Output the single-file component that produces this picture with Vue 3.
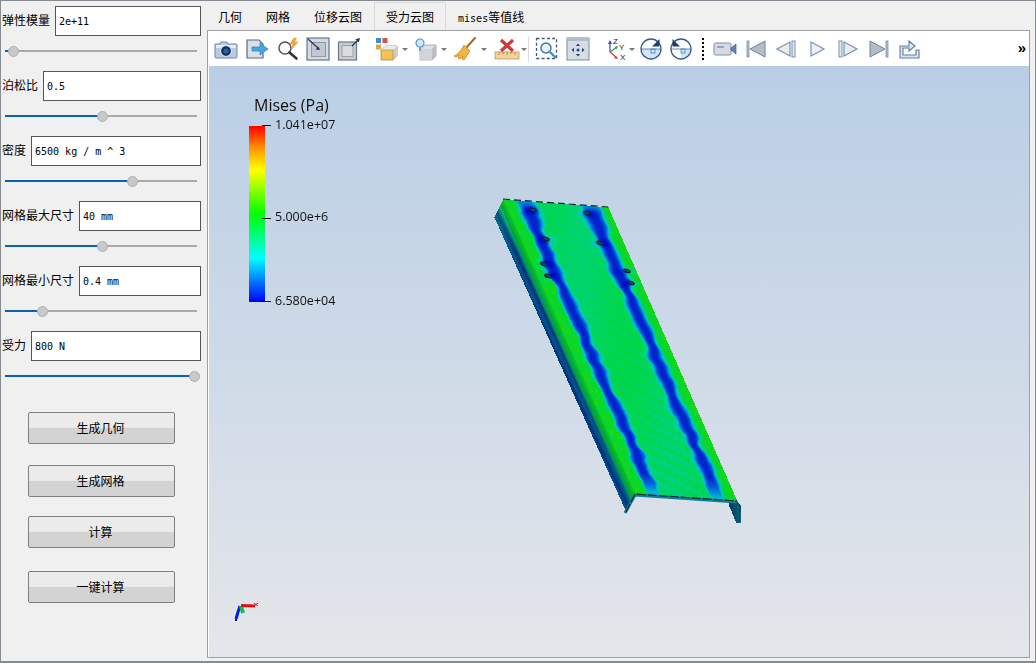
<script setup>
import { ref, onMounted } from 'vue';

const fields = [
    { label: '弹性模量', value: '2e+11', pos: 8 },
    { label: '泊松比', value: '0.5', pos: 97 },
    { label: '密度', value: '6500 kg / m ^ 3', pos: 127 },
    { label: '网格最大尺寸', value: '40 mm', pos: 97 },
    { label: '网格最小尺寸', value: '0.4 mm', pos: 37 },
    { label: '受力', value: '800 N', pos: 189 }
];
const actions = ['生成几何', '生成网格', '计算', '一键计算'];
const tabs = ['几何', '网格', '位移云图', '受力云图'];

const scene = ref(null);

const OX = 209;
const OY = 66;
const holes = [[533, 210], [587, 213], [546, 239], [600, 243], [544, 264], [627, 271], [548, 276], [631, 283]];

// jet 色带
const stops = [
    [0, 0, 10, 200], [0.1, 0, 40, 205], [0.2, 0, 90, 215], [0.3, 0, 165, 215],
    [0.38, 0, 205, 185], [0.46, 0, 212, 110], [0.54, 0, 215, 60], [0.64, 20, 215, 20], [0.8, 90, 225, 0]
];

function jet(val) {
    const t = Math.max(0, Math.min(0.8, val));
    for (let i = 1; i < stops.length; i++) {
        if (t <= stops[i][0]) {
            const a = stops[i - 1];
            const b = stops[i];
            const k = (t - a[0]) / (b[0] - a[0]);
            return [a[1] + (b[1] - a[1]) * k, a[2] + (b[2] - a[2]) * k, a[3] + (b[3] - a[3]) * k];
        }
    }
    return stops[stops.length - 1].slice(1);
}

function smooth(a, b, x) {
    const t = Math.max(0, Math.min(1, (x - a) / (b - a)));
    return t * t * (3 - 2 * t);
}

function hash(x, y) {
    const h = Math.sin(x * 127.1 + y * 311.7) * 43758.5453;
    return h - Math.floor(h);
}

function mottle(x, y) {
    return (Math.sin(x * 0.71 + y * 0.33) * Math.sin(y * 0.41 - x * 0.23) + Math.sin(x * 0.29 - y * 0.57 + 1.3)) * 0.5;
}

function topValue(s, v, x, y) {
    const w1 = 0.007 * Math.sin(v * 17 + 1) + 0.006 * Math.sin(v * 47) + 0.005 * Math.sin(v * 113) + 0.006 * v * Math.sin(v * 89);
    const w2 = 0.007 * Math.sin(v * 14 + 2) + 0.006 * Math.sin(v * 43 + 1) + 0.005 * Math.sin(v * 107) + 0.006 * v * Math.sin(v * 83);
    const spread = 0.095 + 0.016 * Math.sin(v * 37) + 0.012 * Math.sin(v * 71 + 3) + 0.03 * (1 - smooth(0, 0.2, v));
    let base = 0.49 + 0.025 * Math.sin(v * 9 + s * 6);
    if (s < 0.13) base = 0.6 + (hash(x, y) - 0.5) * 0.14;
    if (s > 0.9) base = 0.53 + (s - 0.9) * 1.1;
    const d = Math.min(Math.abs(s - 0.19 - w1), Math.abs(s - 0.82 - w2));
    let val = 0.09 + (base - 0.09) * smooth(0.014, 0.014 + spread, d);
    val += mottle(x, y) * 0.04 * smooth(0.02, 0.08, d) * (0.4 + v);
    if (v > 0.92) val = Math.max(val, 0.09 + (v - 0.92) * 3.4);
    if (v < 0.04) val = Math.max(val, 0.28 * (1 - v / 0.04) + val * (v / 0.04));
    for (const h of holes) {
        const dx = (x - h[0]) / 9;
        const dy = (y - h[1]) / 4;
        val -= 0.16 * Math.exp(-(dx * dx + dy * dy));
    }
    return val;
}

function sideColor(w, v, x, y) {
    const grain = hash(x, y) - 0.5;
    const far = 1 - smooth(0, 0.18, v);
    if (w < 0.36) {
        const c = jet(0.6 - w * 0.3 + grain * 0.14);
        return c.map((n) => n * (0.92 - w * 0.5));
    }
    const k = smooth(0.36, 0.6, w);
    const band = 0.5 + 0.5 * Math.sin(w * 15 + v * 6 + grain);
    const r = 8 * (1 - k);
    const g = 150 * (1 - k) + (52 + band * 32) * k + far * 55 * (1 - w * 0.6);
    const b = 100 * (1 - k) + (118 + band * 26) * k;
    return [r, g, b];
}

function inPoly(poly, x, y) {
    let inside = false;
    for (let i = 0, j = poly.length - 1; i < poly.length; j = i++) {
        const a = poly[i];
        const b = poly[j];
        if ((a[1] > y) !== (b[1] > y) && x < ((b[0] - a[0]) * (y - a[1])) / (b[1] - a[1]) + a[0]) inside = !inside;
    }
    return inside;
}

function drawPlate(ctx, w, h) {
    const img = ctx.createImageData(w, h);
    const rightLip = [[728, 502], [738, 502], [741, 506], [740, 523], [736, 523], [729, 506]];
    for (let py = 190; py < 530; py++) {
        const y = py - OY;
        for (let px = 485; px < 745; px++) {
            const dx = px - 503;
            const dy = py - 199;
            const raw = (dx * 295 - dy * 132) / 29919;
            const v = (-dx * 8 + dy * 105) / 29919;
            const w1 = (295 * dx - 132 * dy) / -5031;
            const v1 = (18 * dx + 9 * dy) / 5031;
            let col = null;
            if (raw >= 0 && v >= 0 && v <= 1) {
                const s = raw / (1 - 0.025 * v);
                if (s <= 1) col = jet(topValue(s, v, px, py));
            } else if (w1 >= 0 && w1 <= 1 && v1 >= 0 && v1 <= 1) {
                col = sideColor(w1, v1, px, py);
            } else if (inPoly(rightLip, px, py)) {
                col = px > 737 ? [12, 105, 125] : [10, 52 + (px - 728) * 4, 105];
            }
            if (col) {
                const i = (y * w + (px - OX)) * 4;
                img.data[i] = col[0];
                img.data[i + 1] = col[1];
                img.data[i + 2] = col[2];
                img.data[i + 3] = 255;
            }
        }
    }
    ctx.putImageData(img, 0, 0);
}

function line(ctx, pts, color, width, dash) {
    ctx.beginPath();
    pts.forEach((p, i) => (i ? ctx.lineTo(p[0] - OX, p[1] - OY) : ctx.moveTo(p[0] - OX, p[1] - OY)));
    ctx.strokeStyle = color;
    ctx.lineWidth = width;
    ctx.setLineDash(dash || []);
    ctx.stroke();
    ctx.setLineDash([]);
}

function drawDetails(ctx) {
    // 孔
    for (const h of holes) {
        ctx.beginPath();
        ctx.ellipse(h[0] - OX, h[1] - OY, 3.4, 1.6, 0.25, 0, Math.PI * 2);
        ctx.fillStyle = '#0c4a5c';
        ctx.fill();
        ctx.strokeStyle = '#0b2030';
        ctx.lineWidth = 1.1;
        ctx.stroke();
    }
    // 边线
    line(ctx, [[503, 199], [608, 207]], '#14242e', 1.2, [7, 4]);
    line(ctx, [[625, 513], [635, 495], [737, 502]], '#0c7f9a', 3);
    line(ctx, [[626, 512], [635, 494], [737, 501]], '#10262f', 1.2, [9, 2]);
    line(ctx, [[737, 502], [740, 506], [739, 522]], '#12303c', 1);
    // 坐标轴
    line(ctx, [[240, 606], [238, 612], [236, 619]], '#0020e0', 3);
    line(ctx, [[235, 620], [237, 620]], '#001a90', 2);
    line(ctx, [[241, 606], [243, 613]], '#10c040', 4);
    line(ctx, [[241, 605.5], [255, 606]], '#e01010', 3);
    line(ctx, [[254, 603], [258, 606]], '#e01010', 1);
    line(ctx, [[258, 603], [254, 606]], '#e01010', 1);
}

onMounted(() => {
    const canvas = scene.value;
    const ctx = canvas.getContext('2d');
    drawPlate(ctx, canvas.width, canvas.height);
    drawDetails(ctx);
});
</script>

<template>
    <div class="window">
        <!-- 左侧参数 -->
        <aside class="side">
            <template v-for="f in fields" :key="f.label">
                <div class="field">
                    <span class="field-label">{{ f.label }}</span>
                    <input class="field-input" type="text" :value="f.value" />
                </div>
                <div class="slider">
                    <div class="groove">
                        <div class="groove-fill" :style="{ width: f.pos + 'px' }"></div>
                        <div class="handle" :style="{ left: f.pos - 5 + 'px' }"></div>
                    </div>
                </div>
            </template>
            <div class="actions">
                <button v-for="a in actions" :key="a" class="action">{{ a }}</button>
            </div>
        </aside>

        <main class="main">
            <div class="tabs">
                <div v-for="(t, i) in tabs" :key="t" class="tab" :class="{ active: i === 3 }">{{ t }}</div>
                <div class="tab"><span class="mono">mises</span>等值线</div>
            </div>
            <div class="pane">
                <div class="toolbar">
                    <!-- 截图 -->
                    <div class="tool">
                        <svg width="24" height="24" viewBox="0 0 24 24">
                            <path d="M1 7h5l1-2h6l1 2h8a1 1 0 0 1 1 1v12a1 1 0 0 1-1 1H2a1 1 0 0 1-1-1z" fill="#b9cbe2" stroke="#6d86a8" />
                            <rect x="2" y="8" width="20" height="3" fill="#e4ecf6" />
                            <circle cx="12" cy="14" r="5.4" fill="#16305e" stroke="#e8eef6" />
                            <circle cx="12" cy="14" r="2.6" fill="#2a62a8" />
                        </svg>
                    </div>
                    <!-- 导出 -->
                    <div class="tool">
                        <svg width="24" height="24" viewBox="0 0 24 24">
                            <path d="M2 3h12l4 4v14H2z" fill="#dcdfe5" stroke="#5d6b80" stroke-width="1.2" />
                            <path d="M7 10h8V6l8 6-8 6v-4H7z" fill="#45a6e6" stroke="#2f7fbd" stroke-width=".7" />
                        </svg>
                    </div>
                    <!-- 放大镜闪电 -->
                    <div class="tool">
                        <svg width="24" height="24" viewBox="0 0 24 24">
                            <circle cx="9" cy="11" r="6" fill="#fff" stroke="#555" stroke-width="1.5" />
                            <path d="M13.5 15.5l7 6" stroke="#333" stroke-width="2.6" stroke-linecap="round" />
                            <path d="M18 1l-4 6h3l-2 6 7-8h-3.500l2-4z" fill="#f2a33a" stroke="#d98a20" stroke-width=".4" />
                        </svg>
                    </div>
                    <!-- 重置相机 -->
                    <div class="tool">
                        <svg width="24" height="24" viewBox="0 0 24 24">
                            <rect x="1" y="1" width="22" height="22" fill="#d3dbe6" stroke="#66758a" stroke-width="1.200" />
                            <rect x="5.500" y="5.500" width="14" height="14" fill="#c2c8d0" stroke="#8f99a6" />
                            <path d="M2 2l10 9" stroke="#23344f" stroke-width="1.200" />
                            <path d="M14 13l-4.500-.6 3-3z" fill="#23344f" />
                        </svg>
                    </div>
                    <!-- 缩放到数据 -->
                    <div class="tool">
                        <svg width="24" height="24" viewBox="0 0 24 24">
                            <rect x="1.500" y="5" width="18" height="18" fill="#c9ccd1" stroke="#6c7788" stroke-width="1.200" />
                            <rect x="5" y="8.500" width="11" height="11" fill="#d9dbde" stroke="#9aa1ac" />
                            <path d="M15 9l6-6" stroke="#23344f" stroke-width="1.200" />
                            <path d="M23 1l-1.200 4.600-3.400-3.400z" fill="#23344f" />
                        </svg>
                    </div>
                    <!-- 选择单元 -->
                    <div class="tool drop first-drop">
                        <svg width="26" height="24" viewBox="0 0 26 24">
                            <path d="M6 13l5-4h11v10l-4 4H6z" fill="#f6c253" stroke="#9a8a6a" stroke-width=".8" />
                            <path d="M18 13l4-4v10l-4 4z" fill="#c9ccd2" />
                            <path d="M6 13l5-4h11l-4 4z" fill="#e9ebef" />
                            <path d="M6 13h12v10" fill="none" stroke="#b59a5a" stroke-width=".8" />
                            <rect x="1" y="1" width="5" height="5" fill="#3c8ad0" />
                            <rect x="7.500" y="1" width="5" height="5" fill="#d0564f" />
                            <rect x="1" y="7.500" width="5" height="5" fill="#e5a83c" />
                        </svg>
                        <i class="caret"></i>
                    </div>
                    <!-- 灯泡 -->
                    <div class="tool drop">
                        <svg width="26" height="24" viewBox="0 0 26 24">
                            <path d="M6 12l5-4h11v11l-4 4H6z" fill="#dfe2e6" stroke="#9aa0a8" stroke-width=".8" />
                            <path d="M18 12l4-4v11l-4 4z" fill="#b9bdc4" />
                            <path d="M6 12h12v11H6z" fill="#d0d3d8" />
                            <circle cx="6" cy="6" r="4" fill="#cfe6fa" stroke="#4f94d0" stroke-width="1.200" />
                            <path d="M5 10v4h2v-4" fill="#8aa0b8" />
                        </svg>
                        <i class="caret"></i>
                    </div>
                    <!-- 扫帚 -->
                    <div class="tool drop">
                        <svg width="26" height="24" viewBox="0 0 26 24">
                            <path d="M21 1l-9 10" stroke="#a06a24" stroke-width="2" stroke-linecap="round" />
                            <path d="M10 8l6 6-6 9-2-1 1-3-3 3-2-1 1-3-3 2-2-1c4-2 7-5 10-11z" fill="#f0b545" stroke="#c78a26" stroke-width=".8" />
                        </svg>
                        <i class="caret"></i>
                    </div>
                    <!-- 标尺 -->
                    <div class="tool drop">
                        <svg width="26" height="24" viewBox="0 0 26 24">
                            <rect x="1" y="15" width="24" height="7" fill="#f2d49a" stroke="#bb9a60" stroke-width=".8" />
                            <path d="M5 15v3M9 15v2M13 15v3M17 15v2M21 15v3" stroke="#a98950" />
                            <path d="M7 3l12 11M19 3L7 14" stroke="#cf3a35" stroke-width="3.200" />
                        </svg>
                        <i class="caret"></i>
                    </div>
                    <i class="sep"></i>
                    <!-- 框选缩放 -->
                    <div class="tool">
                        <svg width="24" height="24" viewBox="0 0 24 24">
                            <rect x="1.500" y="1.500" width="20" height="20" fill="#fff" stroke="#40587e" stroke-width="1.300" stroke-dasharray="3 2.200" />
                            <circle cx="11" cy="11" r="5" fill="#eaf4fc" stroke="#3d6fa8" stroke-width="1.400" />
                            <path d="M15 15l6 6" stroke="#3a8fd0" stroke-width="2.400" />
                        </svg>
                    </div>
                    <!-- 中心 -->
                    <div class="tool">
                        <svg width="24" height="24" viewBox="0 0 24 24">
                            <rect x="1" y="1" width="22" height="22" fill="#d6dde7" stroke="#7e8ca0" />
                            <rect x="1" y="1" width="22" height="3" fill="#aebccd" />
                            <path d="M12 6.500l2.200 2.500h-4.400zM12 19.500l2.200-2.500h-4.400zM5.500 13l2.500-2.200v4.400zM18.500 13L16 10.800v4.400z" fill="#2f4a6e" />
                            <circle cx="12" cy="13" r="1.500" fill="#2f4a6e" />
                        </svg>
                    </div>
                    <!-- 坐标轴方向 -->
                    <div class="tool drop axes">
                        <svg width="22" height="24" viewBox="0 0 22 24">
                            <path d="M4 15V5" stroke="#2f52b0" stroke-width="1.200" />
                            <path d="M4 3l2 4H2z" fill="#2f52b0" />
                            <path d="M4 15l7-5" stroke="#2a9a4a" stroke-width="1.200" />
                            <path d="M12 9l-1.500 3.500-2-2.600z" fill="#2a9a4a" />
                            <path d="M4 15l7 6" stroke="#d83a30" stroke-width="1.200" />
                            <path d="M12 22l-4-.8 2-2.400z" fill="#d83a30" />
                            <text x="7" y="7" class="axis-letter">Z</text>
                            <text x="13" y="13" class="axis-letter">Y</text>
                            <text x="14" y="23" class="axis-letter">X</text>
                        </svg>
                        <i class="caret"></i>
                    </div>
                    <!-- 旋转 -->
                    <div class="tool">
                        <svg width="24" height="24" viewBox="0 0 24 24">
                            <path d="M2 12h20a10 10 0 0 1-20 0z" fill="#cfe6f7" />
                            <rect x="12" y="12" width="4" height="4" fill="none" stroke="#4a7fb0" stroke-width=".8" />
                            <path d="M2 12h20" stroke="#3f6fa0" stroke-width=".8" />
                            <circle cx="12" cy="12" r="10" fill="none" stroke="#3a5a86" stroke-width="1.300" />
                            <path d="M20.500 2v7.500h-7.500z" fill="#1f3e6c" />
                        </svg>
                    </div>
                    <div class="tool">
                        <svg width="24" height="24" viewBox="0 0 24 24">
                            <path d="M12 12h10a10 10 0 0 1-10 10z" fill="#cfe6f7" />
                            <path d="M2 12a10 10 0 0 0 10 10V12z" fill="#fff" />
                            <rect x="12" y="12" width="4" height="4" fill="none" stroke="#4a7fb0" stroke-width=".8" />
                            <path d="M2 12h20" stroke="#3f6fa0" stroke-width=".8" />
                            <circle cx="12" cy="12" r="10" fill="none" stroke="#3a5a86" stroke-width="1.300" />
                            <path d="M3.500 2v7.500H11z" fill="#1f3e6c" />
                        </svg>
                    </div>
                    <i class="dots"></i>
                    <!-- 动画相机 -->
                    <div class="tool">
                        <svg width="24" height="24" viewBox="0 0 24 24">
                            <rect x="1" y="6" width="17" height="12" rx="1.500" fill="#d6dbe3" stroke="#7f8ea3" />
                            <rect x="4" y="9" width="7" height="2" fill="#9aa6b6" />
                            <path d="M18 11l5-4v10l-5-4z" fill="#5d86b8" stroke="#3c5f8e" stroke-width=".7" />
                        </svg>
                    </div>
                    <!-- 播放控制 -->
                    <div class="tool">
                        <svg width="24" height="24" viewBox="0 0 24 24">
                            <rect x="3" y="4" width="2" height="16" fill="#b9c2ce" stroke="#6f84a2" stroke-width=".7" />
                            <path d="M21 4v16L6 12z" fill="#b4bcc8" stroke="#6f84a2" />
                        </svg>
                    </div>
                    <div class="tool">
                        <svg width="24" height="24" viewBox="0 0 24 24">
                            <path d="M16 5v14L3 12z" fill="#e8ecf1" stroke="#7d93b0" stroke-width="1.200" />
                            <rect x="18" y="4" width="3" height="16" fill="#e4e8ee" stroke="#7d93b0" />
                        </svg>
                    </div>
                    <div class="tool">
                        <svg width="24" height="24" viewBox="0 0 24 24">
                            <path d="M6 5v14l13-7z" fill="#eef1f5" stroke="#7d93b0" stroke-width="1.200" />
                        </svg>
                    </div>
                    <div class="tool">
                        <svg width="24" height="24" viewBox="0 0 24 24">
                            <rect x="3" y="4" width="3" height="16" fill="#e4e8ee" stroke="#7d93b0" />
                            <path d="M8 5v14l13-7z" fill="#e8ecf1" stroke="#7d93b0" stroke-width="1.200" />
                        </svg>
                    </div>
                    <div class="tool">
                        <svg width="24" height="24" viewBox="0 0 24 24">
                            <path d="M3 4v16l15-8z" fill="#b4bcc8" stroke="#6f84a2" />
                            <rect x="19" y="4" width="2" height="16" fill="#b9c2ce" stroke="#6f84a2" stroke-width=".7" />
                        </svg>
                    </div>
                    <div class="tool">
                        <svg width="24" height="24" viewBox="0 0 24 24">
                            <path d="M3 9h9V4l6 5-6 5v-3H6v7h13v-5h3v8H3z" fill="#dbe5f0" stroke="#5c7fa8" stroke-width="1.100" />
                        </svg>
                    </div>
                    <span class="more">»</span>
                </div>

                <!-- 渲染视图 -->
                <div class="view">
                    <canvas ref="scene" class="scene" width="820" height="592"></canvas>
                    <div class="legend">
                        <div class="legend-title">Mises (Pa)</div>
                        <div class="legend-bar"></div>
                        <i class="tick t-top"></i>
                        <i class="tick t-mid"></i>
                        <i class="tick t-bot"></i>
                        <span class="legend-num n-top">1.041e+07</span>
                        <span class="legend-num n-mid">5.000e+6</span>
                        <span class="legend-num n-bot">6.580e+04</span>
                    </div>
                </div>
            </div>
        </main>
    </div>
</template>

<style scoped>
.window {
    width: 1036px;
    height: 663px;
    box-sizing: border-box;
    display: flex;
    background: #f0f0f0;
    border: 1px solid #868c94;
    border-width: 1px 1px 2px 1px;
    font-family: "Noto Sans CJK SC", "Liberation Sans", sans-serif;
    font-size: 12px;
    color: #000;
    overflow: hidden;
}

.side {
    width: 206px;
    flex: none;
    padding-top: 5px;
}

.field {
    display: flex;
    align-items: center;
    gap: 5px;
    height: 30px;
    padding: 0 6px 0 1px;
}

.field-label {
    flex: none;
    line-height: 16px;
    margin-top: -2px;
}

.field-input {
    flex: 1;
    min-width: 0;
    height: 30px;
    box-sizing: border-box;
    border: 1px solid #555;
    background: #fff;
    padding: 0 3px;
    font-family: "DejaVu Sans Mono", "Liberation Mono", monospace;
    font-size: 10px;
    color: #000;
    outline: none;
}

.slider {
    height: 35px;
    padding: 14px 10px 0 4px;
    box-sizing: border-box;
}

.groove {
    position: relative;
    height: 2px;
    background: #a9a9a9;
}

.groove-fill {
    height: 2px;
    background: #0a62b6;
}

.handle {
    position: absolute;
    top: -4px;
    width: 11px;
    height: 11px;
    box-sizing: border-box;
    border-radius: 50%;
    background: #c9c9c9;
    border: 1px solid #b0b0b0;
}

.actions {
    display: flex;
    flex-direction: column;
    padding: 16px 0 0 27px;
}

.action {
    width: 147px;
    height: 32px;
    padding: 0 2px 2px 0;
    border: 1px solid #808080;
    border-radius: 2px;
    background: linear-gradient(#ebebeb 0, #ebebeb 48%, #d3d3d3 50%, #d3d3d3 100%);
    font-family: inherit;
    font-size: 12px;
    color: #000;
}

.action:nth-child(2) {
    margin-top: 21px;
}

.action:nth-child(3) {
    margin-top: 19px;
}

.action:nth-child(4) {
    margin-top: 23px;
}

.main {
    flex: 1;
    min-width: 0;
    display: flex;
    flex-direction: column;
    padding: 1px 5px 3px 0;
}

.tabs {
    display: flex;
    height: 28px;
    flex: none;
}

.tab {
    padding: 0 12px;
    line-height: 28px;
    box-sizing: border-box;
    margin-top: 1px;
}

.tab:first-child {
    padding-left: 11px;
}

.tab.active {
    margin-top: 0;
    background: #f0f0f0;
    border: 1px solid #d9d9d9;
    border-bottom: 0;
    padding: 0 11px;
}

.mono {
    font-family: "DejaVu Sans Mono", "Liberation Mono", monospace;
    font-size: 10px;
}

.pane {
    flex: 1;
    min-height: 0;
    display: flex;
    flex-direction: column;
    border: 1px solid #a0a0a0;
    background: #fff;
    padding-left: 1px;
}

.toolbar {
    flex: none;
    height: 35px;
    display: flex;
    align-items: center;
    padding-left: 2px;
    position: relative;
    background: #fff;
}

.tool {
    flex: none;
    width: 30.7px;
    display: flex;
    align-items: center;
    justify-content: center;
}

.tool svg {
    display: block;
}

.tool.drop {
    width: 39.6px;
    gap: 1px;
}

.tool.first-drop {
    margin-left: 7px;
}

.tool.axes {
    margin-left: 11.6px;
    width: 30.6px;
}

.caret {
    flex: none;
    width: 0;
    height: 0;
    border: 3px solid transparent;
    border-top: 3px solid #777;
    border-bottom: 0;
    margin-top: 2px;
}

.sep {
    flex: none;
    width: 1px;
    height: 26px;
    background: #dcdcdc;
    margin: 0 3px 0 -2px;
}

.dots {
    flex: none;
    width: 2px;
    height: 22px;
    margin: 0 6px 0 5px;
    background: repeating-linear-gradient(#000 0, #000 2px, transparent 2px, transparent 4px);
}

.more {
    position: absolute;
    right: 3px;
    top: 9px;
    font-size: 15px;
    font-weight: bold;
    line-height: 16px;
    font-family: "Liberation Sans", sans-serif;
}

.axis-letter {
    font-family: "Liberation Sans", sans-serif;
    font-size: 8px;
    fill: #222;
}

.view {
    flex: 1;
    min-height: 0;
    position: relative;
    background: linear-gradient(#b9cee5, #e4e6ea);
    overflow: hidden;
}

.scene {
    position: absolute;
    left: 0;
    top: 0;
}

.legend {
    position: absolute;
    left: 40px;
    top: 29px;
    width: 110px;
    height: 220px;
    font-family: "Open Sans", "Liberation Sans", sans-serif;
    color: #111;
}

.legend-title {
    position: absolute;
    left: 5px;
    top: -1px;
    font-size: 16px;
    line-height: 22px;
    white-space: nowrap;
}

.legend-bar {
    position: absolute;
    left: 0;
    top: 31px;
    width: 16px;
    height: 176px;
    background: linear-gradient(#ff0000, #ff9900 13%, #ffff00 25%, #00ff00 50%, #00ffff 75%, #0000ff);
}

.tick {
    position: absolute;
    height: 1px;
    background: #111;
}

.t-top {
    left: 13px;
    top: 30px;
    width: 9px;
}

.t-mid {
    left: 13px;
    top: 123px;
    width: 9px;
}

.t-bot {
    left: 13px;
    top: 206px;
    width: 9px;
}

.legend-num {
    position: absolute;
    left: 26px;
    font-size: 12.500px;
    line-height: 16px;
    white-space: nowrap;
}

.n-top {
    top: 22px;
}

.n-mid {
    top: 114px;
}

.n-bot {
    top: 198px;
}
</style>

<style>
html,
body {
    margin: 0;
    overflow: hidden;
}
</style>
